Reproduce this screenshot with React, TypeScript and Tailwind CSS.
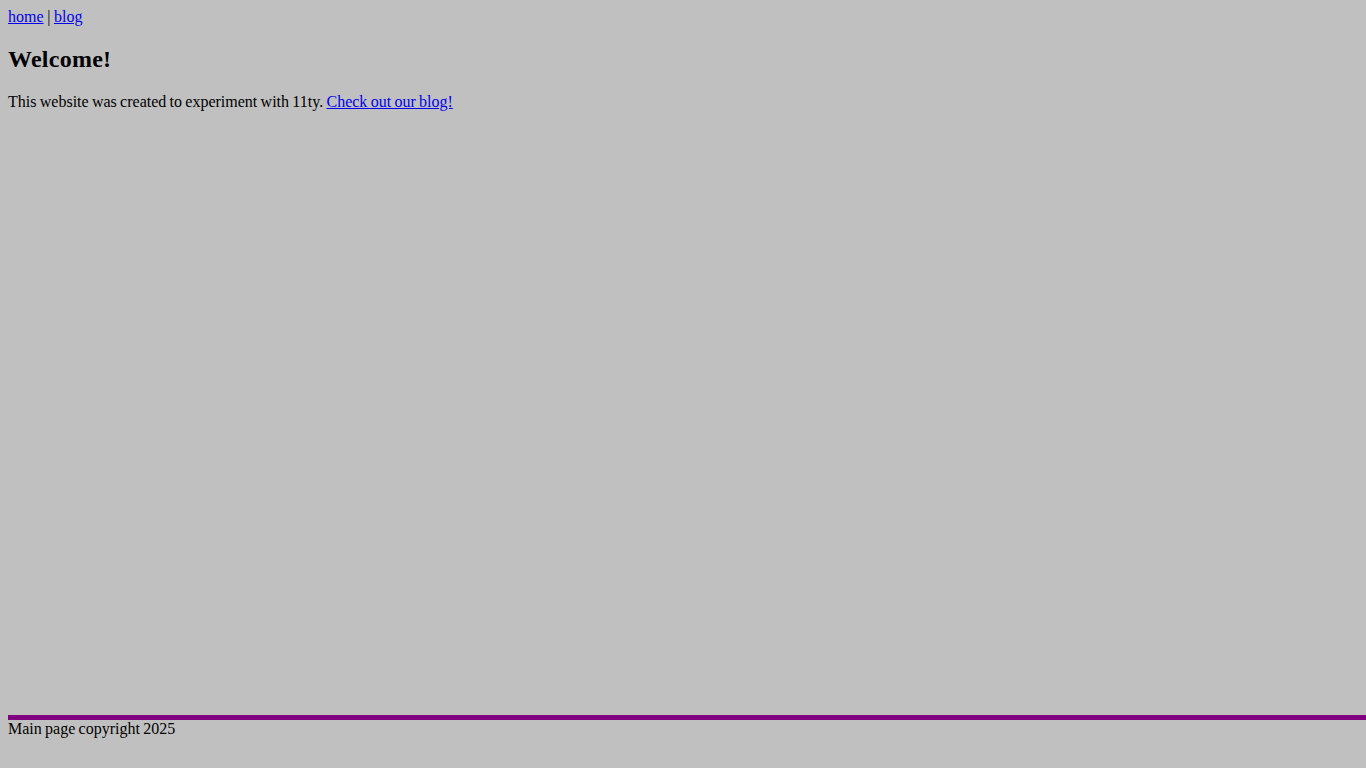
export default function App() {
  return (
    <div className="min-h-screen bg-[#c0c0c0] text-black pl-2 pt-2 pb-[30px] flex flex-col font-['Liberation_Serif','Times_New_Roman',serif] text-[16px] leading-[normal] [word-spacing:-0.7px]">
      <div className="flex-1">
        <nav className="[word-spacing:-0.4px]">
          <a href="#" className="text-[#0000ee] underline">home</a> |{" "}
          <a href="#" className="text-[#0000ee] underline">blog</a>
        </nav>
        <h2 className="text-[24px] font-bold my-[19.92px] leading-[normal] tracking-[0.25px]">Welcome!</h2>
        <p className="my-4">
          This website was created to experiment with 11ty.{" "}
          <a href="#" className="text-[#0000ee] underline">Check out our blog!</a>
        </p>
      </div>
      <footer className="border-t-[5px] border-[#800080]">
        Main page copyright 2025
      </footer>
    </div>
  );
}
